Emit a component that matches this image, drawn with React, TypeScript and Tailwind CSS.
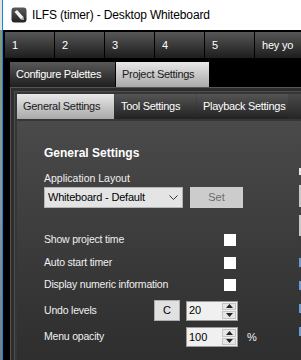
import React from "react";

const font = "font-['Liberation_Sans',Arial,sans-serif]";

const numberTabs = ["1", "2", "3", "4", "5", "hey yo"];

function AppIcon() {
  return (
    <svg width="16" height="16" viewBox="0 0 16 16">
      <defs>
        <linearGradient id="ic" x1="0" y1="0" x2="0" y2="1">
          <stop offset="0" stopColor="#5a5a5a" />
          <stop offset="1" stopColor="#222" />
        </linearGradient>
      </defs>
      <rect x="0.5" y="0.5" width="15" height="15" rx="3" fill="url(#ic)" />
      <polygon points="3.5,5 6,3 12.5,10 10,12.5" fill="#f2f2f2" />
      <polygon points="10,12.5 12.5,10 13,13" fill="#bdbdbd" />
    </svg>
  );
}

function Spinner({ value }: { value: string }) {
  return (
    <div className="flex h-[20px] w-[52px] items-center border border-[#9a9a9a] bg-[#f0f0f0]">
      <span className="flex-1 pl-[2px] text-[11px] leading-none text-black">{value}</span>
      <div className="mr-px flex h-[16px] w-[14px] flex-col gap-px">
        <div className="flex flex-1 items-center justify-center border border-[#c4c4c4] bg-[#e6e6e6]">
          <svg width="7" height="4" viewBox="0 0 7 4">
            <polygon points="0,4 7,4 3.5,0" fill="#222" />
          </svg>
        </div>
        <div className="flex flex-1 items-center justify-center border border-[#c4c4c4] bg-[#e6e6e6]">
          <svg width="7" height="4" viewBox="0 0 7 4">
            <polygon points="0,0 7,0 3.5,4" fill="#222" />
          </svg>
        </div>
      </div>
    </div>
  );
}

function CheckRow({ label }: { label: string }) {
  return (
    <div className="flex h-[22px] items-center">
      <span className="w-[180px] text-[10.5px] tracking-[-0.2px] text-[#f0f0f0]">{label}</span>
      <div className="h-[12px] w-[12px] bg-white" />
    </div>
  );
}

export default function App() {
  return (
    <div className={`flex h-[360px] w-[301px] overflow-hidden ${font}`}>
      {/* desktop behind the window */}
      <div className="flex w-[2px] flex-col">
        <div className="h-[30px] bg-[#e4e4e4]" />
        <div className="flex-1 bg-gradient-to-b from-[#7f9a7a] via-[#8796a8] to-[#6f7f90]" />
      </div>
      <div className="w-px bg-[#1883d7]" />

      <div className="flex min-w-0 flex-1 flex-col bg-black">
        {/* title bar */}
        <div className="flex h-[30px] shrink-0 items-center bg-white pl-[8px]">
          <AppIcon />
          <span className="ml-[5px] text-[12px] tracking-[-0.15px] text-black">
            ILFS (timer) - Desktop Whiteboard
          </span>
        </div>

        {/* numbered tabs */}
        <div className="mt-[2px] flex h-[26px] shrink-0 gap-px pl-[2px]">
          {numberTabs.map((t) => (
            <div
              key={t}
              className="flex h-full w-[49px] shrink-0 items-center bg-gradient-to-b from-[#585858] to-[#1e1e1e] pl-[7px] text-[11px] tracking-[-0.2px] text-white"
            >
              {t}
            </div>
          ))}
        </div>

        {/* top level tabs */}
        <div className="mt-[4px] flex h-[25px] shrink-0 gap-px pl-[7px]">
          <div className="flex w-[105px] items-center bg-gradient-to-b from-[#595959] to-[#1f1f1f] pl-[6px] text-[11px] tracking-[-0.3px] text-white">
            Configure Palettes
          </div>
          <div className="flex w-[93px] items-center bg-gradient-to-b from-[#e8e8e8] to-[#a9a9a9] pl-[6px] text-[11px] tracking-[-0.3px] text-[#1a1a1a]">
            Project Settings
          </div>
        </div>

        {/* outer frame */}
        <div className="ml-[7px] flex flex-1 flex-col border-l border-t border-[#555] bg-[#2d2d2d] pl-[3px] pt-[3px]">
          <div className="flex flex-1 flex-col border-l border-t border-[#4d4d4d] bg-[#363636] pl-[2px] pt-[2px]">
            {/* inner tab strip */}
            <div className="flex h-[25px] shrink-0 gap-px bg-gradient-to-b from-[#4a4a4a] to-[#262626]">
              <div className="flex w-[97px] items-center bg-gradient-to-b from-[#e8e8e8] to-[#a9a9a9] pl-[6px] text-[11px] tracking-[-0.3px] text-[#1a1a1a]">
                General Settings
              </div>
              <div className="flex w-[81px] items-center bg-gradient-to-b from-[#555] to-[#222] pl-[6px] text-[11px] tracking-[-0.3px] text-white">
                Tool Settings
              </div>
              <div className="flex w-[91px] items-center bg-gradient-to-b from-[#555] to-[#222] pl-[6px] text-[11px] tracking-[-0.3px] text-white">
                Playback Settings
              </div>
            </div>

            {/* panel */}
            <div className="mt-[2px] flex flex-1 bg-gradient-to-b from-[#4a4a4a] to-[#2e2e2e]">
              <div className="flex w-[281px] shrink-0 flex-col pl-[27px]">
                <div className="mt-[24px] h-[16px] text-[12px] font-bold leading-[16px] text-white">
                  General Settings
                </div>
                <div className="mt-[10px] h-[14px] text-[10.5px] leading-[14px] text-[#f0f0f0]">
                  Application Layout
                </div>
                <div className="mt-[2px] flex h-[21px] gap-[7px]">
                  <div className="flex w-[139px] items-center border border-[#b4b4b4] bg-[#e4e4e4] pl-[3px] pr-[4px]">
                    <span className="flex-1 text-[11px] tracking-[-0.2px] text-black">Whiteboard - Default</span>
                    <svg width="9" height="6" viewBox="0 0 9 6">
                      <polyline points="0.5,0.5 4.5,4.5 8.5,0.5" fill="none" stroke="#333" strokeWidth="1" />
                    </svg>
                  </div>
                  <div className="flex w-[53px] items-center justify-center bg-[#cccccc] text-[11px] text-[#6d6d6d]">
                    Set
                  </div>
                </div>

                <div className="mt-[21px] flex flex-col">
                  <CheckRow label="Show project time" />
                  <div className="mt-px">
                    <CheckRow label="Auto start timer" />
                  </div>
                  <CheckRow label="Display numeric information" />
                </div>

                <div className="mt-[4px] flex h-[21px] items-center">
                  <span className="w-[110px] text-[10.5px] tracking-[-0.2px] text-[#f0f0f0]">Undo levels</span>
                  <div className="flex h-[21px] w-[26px] items-center justify-center border border-[#adadad] bg-[#e1e1e1] text-[11px] text-black">
                    C
                  </div>
                  <div className="ml-[6px]">
                    <Spinner value="20" />
                  </div>
                </div>

                <div className="mt-[6px] flex h-[20px] items-center">
                  <span className="w-[142px] text-[10.5px] tracking-[-0.2px] text-[#f0f0f0]">Menu opacity</span>
                  <Spinner value="100" />
                  <span className="ml-[9px] text-[11px] text-[#f0f0f0]">%</span>
                </div>
              </div>

              {/* clipped second column */}
              <div className="flex min-w-0 flex-1 flex-col overflow-hidden pl-px">
                <div className="mt-[47px] h-[7px] w-[3px] bg-[#e8e8e8]" />
                <div className="mt-[10px] h-[22px] w-[3px] bg-[#c8c8c8]" />
                <div className="mt-[8px] h-[21px] w-[3px] bg-[#c8c8c8]" />
                <div className="mt-[22px] h-[9px] w-[3px] bg-[#6f9bd0]" />
                <div className="mt-[14px] h-[9px] w-[3px] bg-[#6f9bd0]" />
                <div className="mt-[14px] h-[9px] w-[3px] bg-[#6f9bd0]" />
                <div className="mt-[14px] h-[9px] w-[3px] bg-[#6f9bd0]" />
              </div>
            </div>
          </div>
        </div>
      </div>
    </div>
  );
}
